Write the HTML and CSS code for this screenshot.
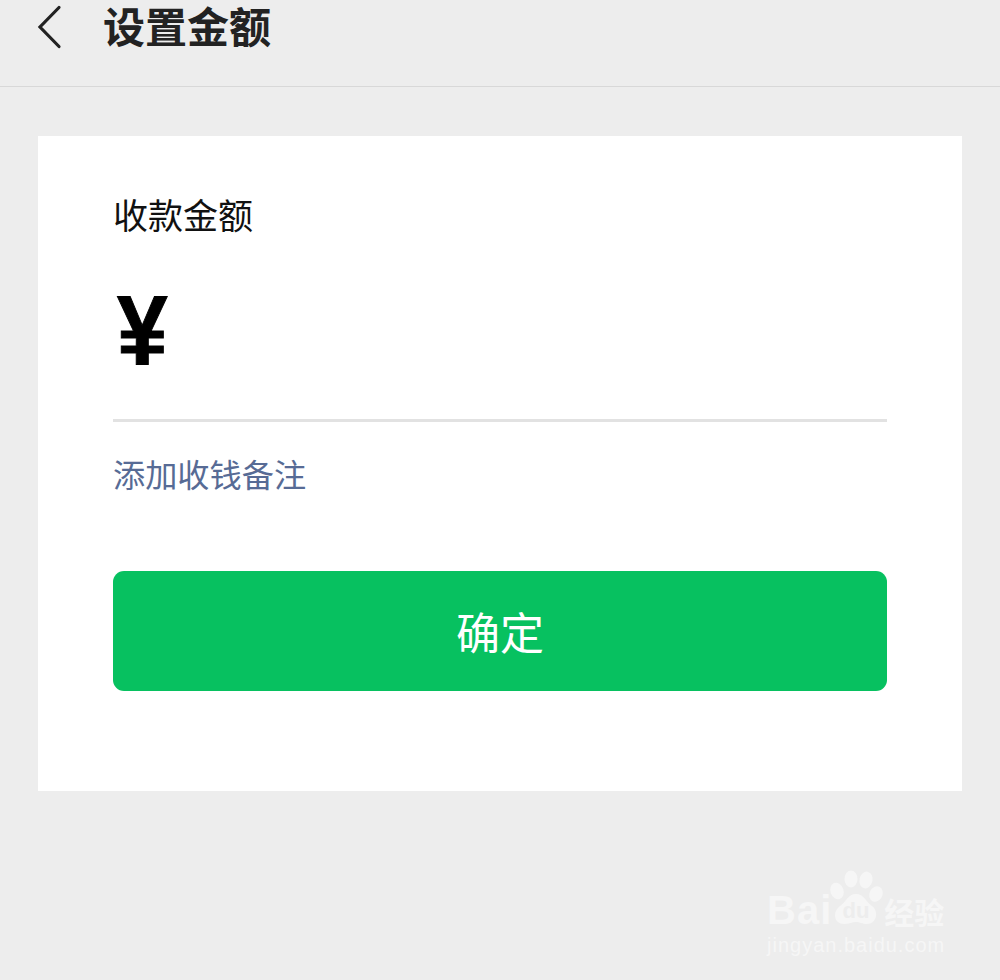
FILE: index.html
```html
<!DOCTYPE html>
<html lang="zh-CN">
<head>
  <meta charset="UTF-8" />
  <meta name="viewport" content="width=device-width, initial-scale=1" />
  <title>设置金额</title>
  <link rel="stylesheet" href="styles.css">
</head>
<body>
  <header class="topbar">
    <button class="back" aria-label="返回">
      <svg width="26" height="46" viewBox="0 0 26 46" fill="none" stroke="#222" stroke-width="3.2" stroke-linecap="round" stroke-linejoin="miter">
        <path d="M22 3.5 L3 23 L22 42.5" />
      </svg>
    </button>
    <h1>设置金额</h1>
  </header>

  <main class="card">
    <div class="label">收款金额</div>
    <div class="amount">
      <span class="yen">¥</span>
    </div>
    <a class="note" href="#">添加收钱备注</a>
    <button class="confirm">确定</button>
  </main>

  <div class="watermark">
    <div class="wm-top">
      <span class="wm-bai">Bai</span>
      <svg class="wm-paw" width="62" height="62" viewBox="0 0 62 62" fill="#f6f6f6">
        <ellipse cx="11" cy="22" rx="6.5" ry="8.5" transform="rotate(-20 11 22)" />
        <ellipse cx="25" cy="10" rx="6.5" ry="8.5" />
        <ellipse cx="40" cy="11" rx="6.5" ry="8.5" transform="rotate(12 40 11)" />
        <ellipse cx="50" cy="25" rx="6.5" ry="8" transform="rotate(25 50 25)" />
        <path d="M30 25 C38 25 40 33 46 37 C53 42 51 55 41 55 C36 55 34 53 30 53 C26 53 23 55 18 55 C8 55 6 43 14 37 C20 33 22 25 30 25 Z" />
        <text x="30" y="49" text-anchor="middle" class="wm-du">du</text>
      </svg>
      <span class="wm-cn">经验</span>
    </div>
    <div class="wm-url">jingyan.baidu.com</div>
  </div>
</body>
</html>
```

FILE: styles.css
```css
* {
  box-sizing: border-box;
}

body {
  margin: 0;
  height: 980px;
  overflow: hidden;
  background: #ededed;
  font-family: "Noto Sans CJK SC", "Liberation Sans", sans-serif;
  position: relative;
}

.topbar {
  height: 87px;
  border-bottom: 1px solid #d8d8d8;
  display: flex;
  align-items: flex-start;
  padding-left: 37px;
}

.back {
  background: none;
  border: none;
  padding: 0;
  margin-top: 4px;
  width: 26px;
  height: 46px;
  display: block;
}

.topbar h1 {
  margin: 0 0 0 40px;
  font-size: 42px;
  line-height: 50px;
  font-weight: 700;
  color: #222;
}

.card {
  width: 924px;
  height: 655px;
  margin: 49px 0 0 38px;
  background: #fff;
  padding: 0 75px;
}

.label {
  padding-top: 54px;
  font-size: 35px;
  line-height: 48px;
  color: #111;
}

.amount {
  height: 184px;
  border-bottom: 3px solid #e2e2e2;
  padding: 43px 0 0 4px;
}

.yen {
  display: block;
  font-family: "Liberation Sans", sans-serif;
  font-size: 98px;
  line-height: 98px;
  font-weight: 700;
  color: #000;
  -webkit-text-stroke: 1px #000;
  transform: scaleX(0.93);
  transform-origin: left center;
}

.note {
  display: block;
  margin-top: 27px;
  font-size: 32.2px;
  line-height: 48px;
  color: #576b95;
  text-decoration: none;
}

.confirm {
  display: block;
  width: 100%;
  height: 120px;
  margin-top: 74px;
  border: none;
  border-radius: 11px;
  background: #07c160;
  color: #fff;
  font-family: inherit;
  font-size: 44px;
  padding-bottom: 2px;
}

.watermark {
  position: absolute;
  left: 767px;
  top: 871px;
  width: 180px;
  color: #f6f6f6;
}

.wm-top {
  display: flex;
  align-items: flex-end;
  height: 62px;
}

.wm-bai {
  font-family: "Liberation Sans", sans-serif;
  font-size: 40px;
  line-height: 46px;
  font-weight: 700;
  letter-spacing: 1px;
}

.wm-paw {
  margin: 0 0 2px -6px;
  flex: none;
}

.wm-du {
  font-family: "Liberation Sans", sans-serif;
  font-size: 22px;
  font-weight: 700;
  fill: #ededed;
}

.wm-cn {
  font-size: 30px;
  line-height: 44px;
  font-weight: 700;
  margin-left: -4px;
  white-space: nowrap;
}

.wm-url {
  font-family: "Liberation Sans", sans-serif;
  font-size: 20px;
  line-height: 24px;
  letter-spacing: 1px;
  white-space: nowrap;
}
```
